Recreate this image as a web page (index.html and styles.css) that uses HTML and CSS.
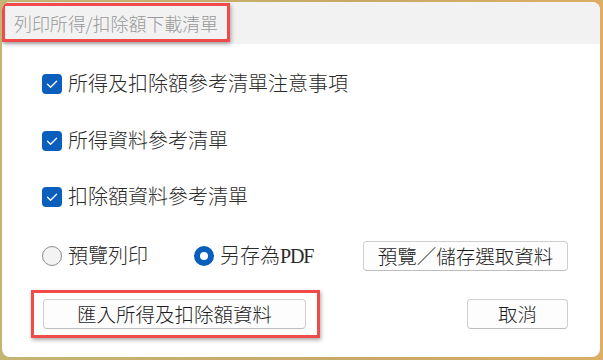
FILE: index.html
```html
<!DOCTYPE html>
<html lang="zh-Hant">
<head>
  <meta charset="UTF-8" />
  <meta name="viewport" content="width=device-width, initial-scale=1.0" />
  <title>列印所得/扣除額下載清單</title>
  <link rel="stylesheet" href="styles.css">
</head>
<body>
  <div class="dialog">
    <header class="titlebar">
      <h1>列印所得/扣除額下載清單</h1>
    </header>
    <div class="content">
      <div class="checks">
        <label class="check-row">
          <span class="checkbox"><svg viewBox="0 0 20 20" width="20" height="20"><path d="M5.5 10.2 L8.6 13.2 L14.6 7.2" fill="none" stroke="#fff" stroke-width="1.3" stroke-linecap="round" stroke-linejoin="round"/></svg></span>
          <span class="label">所得及扣除額參考清單注意事項</span>
        </label>
        <label class="check-row">
          <span class="checkbox"><svg viewBox="0 0 20 20" width="20" height="20"><path d="M5.5 10.2 L8.6 13.2 L14.6 7.2" fill="none" stroke="#fff" stroke-width="1.3" stroke-linecap="round" stroke-linejoin="round"/></svg></span>
          <span class="label">所得資料參考清單</span>
        </label>
        <label class="check-row">
          <span class="checkbox"><svg viewBox="0 0 20 20" width="20" height="20"><path d="M5.5 10.2 L8.6 13.2 L14.6 7.2" fill="none" stroke="#fff" stroke-width="1.3" stroke-linecap="round" stroke-linejoin="round"/></svg></span>
          <span class="label">扣除額資料參考清單</span>
        </label>
      </div>

      <div class="options">
        <label class="radio-row first">
          <span class="radio"></span>
          <span class="label">預覽列印</span>
        </label>
        <label class="radio-row">
          <span class="radio checked"></span>
          <span class="label">另存為<span class="latin">PDF</span></span>
        </label>
        <button class="btn btn-preview">預覽／儲存選取資料</button>
      </div>

      <div class="actions">
        <button class="btn btn-import">匯入所得及扣除額資料</button>
        <button class="btn btn-cancel">取消</button>
      </div>
    </div>

    <!-- annotation boxes -->
    <div class="mark mark-title"></div>
    <div class="mark mark-import"></div>
  </div>
</body>
</html>
```

FILE: styles.css
```css
body {
  margin: 0;
  width: 603px;
  height: 360px;
  overflow: hidden;
  background: linear-gradient(to right, #c4b572 0%, #c9a868 60%, #dcae66 100%);
  font-family: "Liberation Serif", "Noto Sans CJK TC", serif;
  color: #2a2a2a;
}
.dialog {
  position: relative;
  margin: 2px 0 0 2px;
  width: 598px;
  height: 355px;
  background-color: #fff;
  border-radius: 8px;
  overflow: hidden;
}
.titlebar {
  height: 42px;
  background-color: #f2f2f2;
  display: flex;
  align-items: center;
  padding-left: 12px;
}
.titlebar h1 {
  margin: 0;
  font-family: "Noto Sans CJK TC", sans-serif;
  font-weight: 300;
  font-size: 18px;
  color: #999;
  letter-spacing: -0.1px;
}
.content {
  padding: 26px 32px 0 40px;
}
.checks {
  display: flex;
  flex-direction: column;
  gap: 28.5px;
}
.check-row,
.radio-row {
  display: flex;
  align-items: center;
  height: 28px;
  gap: 6px;
  font-size: 20px;
  font-weight: 300;
}
.label {
  line-height: 28px;
}
.latin {
  letter-spacing: -1.2px;
}
.checkbox {
  width: 20px;
  height: 20px;
  border-radius: 4px;
  background-color: #0a5fbd;
  display: flex;
}
.options {
  display: flex;
  align-items: center;
  margin-top: 30px;
  height: 30px;
}
.radio-row.first {
  width: 152px;
}
.radio {
  box-sizing: border-box;
  width: 20px;
  height: 20px;
  border-radius: 50%;
  border: 1px solid #8a8a8a;
  background-color: #f3f3f3;
}
.radio.checked {
  border: 6px solid #0a5fbd;
  background-color: #fff;
}
.btn {
  box-sizing: border-box;
  height: 30px;
  padding: 0;
  background-color: #fdfdfd;
  border: 1px solid #cfcfcf;
  border-bottom-color: #bdbdbd;
  border-radius: 4px;
  font-family: "Noto Sans CJK TC", sans-serif;
  font-weight: 300;
  font-size: 19.5px;
  color: #1c1c1c;
  line-height: 28px;
}
.btn-preview {
  width: 205px;
  margin-left: auto;
}
.actions {
  display: flex;
  justify-content: space-between;
  margin-top: 28px;
}
.btn-import {
  width: 263px;
  margin-left: 1px;
}
.btn-cancel {
  width: 101px;
}
.mark {
  position: absolute;
  border: 3px solid #f04a4a;
  box-shadow: 1px 2px 4px rgba(0, 0, 0, 0.35);
}
.mark-title {
  left: 0;
  top: 1px;
  width: 222px;
  height: 33px;
}
.mark-import {
  left: 29px;
  top: 288px;
  width: 283px;
  height: 42px;
}
```
